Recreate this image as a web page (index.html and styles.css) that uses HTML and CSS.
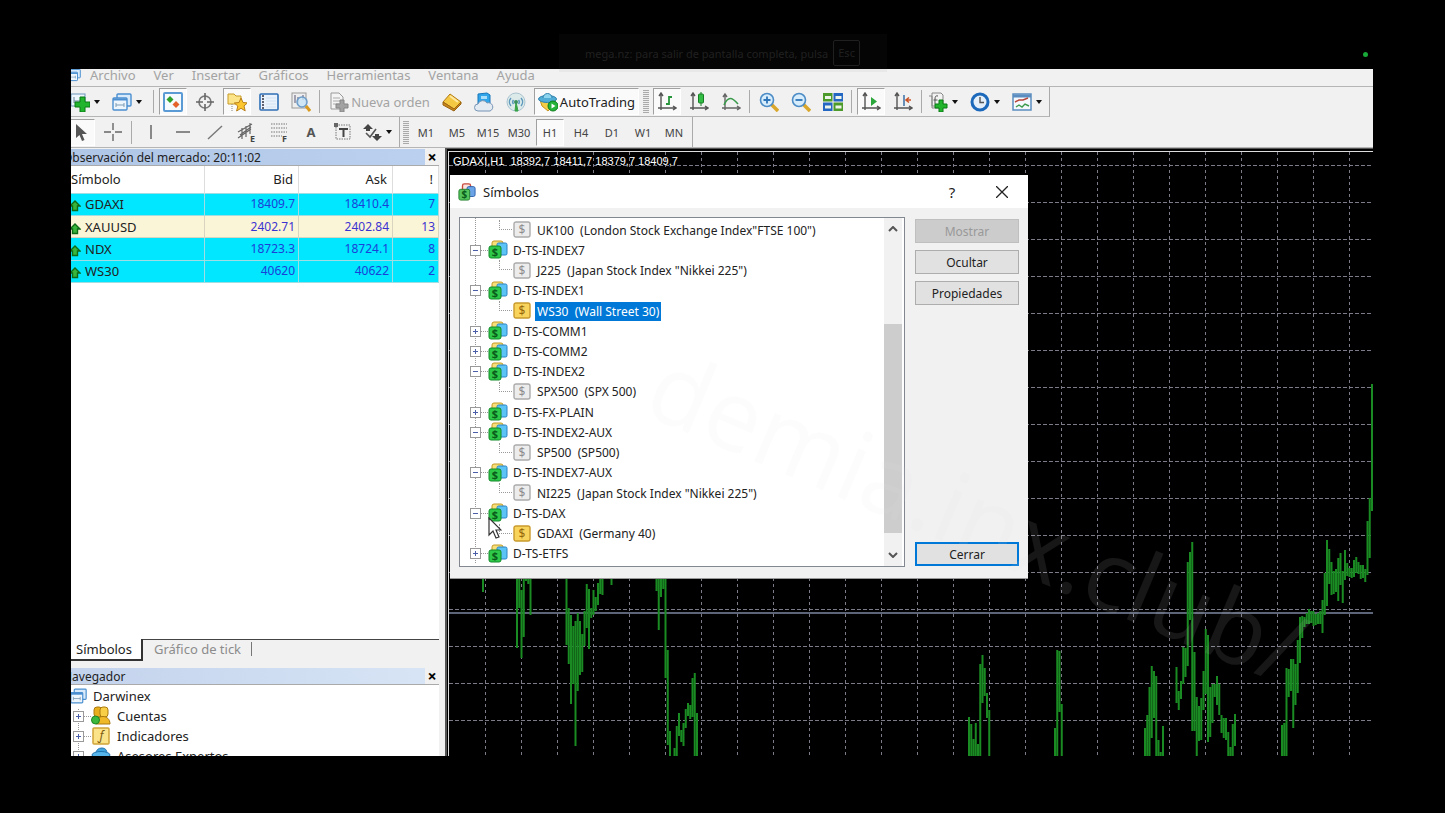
FILE: index.html
```html
<!DOCTYPE html>
<html lang="es">
<head>
  <meta charset="UTF-8">
  <meta name="viewport" content="width=device-width, initial-scale=1.0">
  <title>Darwinex MT4</title>
  <link rel="stylesheet" href="styles.css">
</head>
<body>
  <svg class="defs" aria-hidden="true">
    <symbol id="i-window" viewBox="0 0 20 20"><rect x="5" y="2" width="14" height="12" rx="1" fill="#d9ebfa" stroke="#4b8fd0" stroke-width="1.4"/><rect x="1" y="6" width="14" height="12" rx="1" fill="#eef6fd" stroke="#4b8fd0" stroke-width="1.4"/><path d="M1 7.5h14" stroke="#4b8fd0" stroke-width="2"/><path d="M4 15v-4M4 13h8M12 15v-4" stroke="#7d9bb5" fill="none"/></symbol>
    <symbol id="i-newchart" viewBox="0 0 20 20"><rect x="1" y="2" width="14" height="12" fill="#eef6fd" stroke="#6b93b8"/><path d="M4 11V5M4 9h7" stroke="#68849c"/><path d="M10 5h5v5h5v5h-5v5h-5v-5H5v-5h5z" fill="#22b42c" stroke="#087a14"/></symbol>
    <symbol id="i-market" viewBox="0 0 20 20"><rect x="1" y="1" width="18" height="18" rx="1" fill="#f5fafe" stroke="#5b9bd5" stroke-width="2"/><path d="M7 4l3.500 3.500L7 11 3.500 7.500z" fill="#2da02b"/><path d="M13 9l3.500 3.500L13 16l-3.500-3.500z" fill="#e4632c"/></symbol>
    <symbol id="i-target" viewBox="0 0 20 20"><circle cx="10" cy="10" r="6" fill="none" stroke="#777" stroke-width="1.6"/><path d="M10 1v7M10 12v7M1 10h7M12 10h7" stroke="#666" stroke-width="1.6"/></symbol>
    <symbol id="i-navstar" viewBox="0 0 20 20"><path d="M1 2h6l2 2h5v8H1z" fill="#fbe48a" stroke="#c79a28"/><path d="M5 12v7" stroke="#888" stroke-dasharray="1 1"/><path d="M14 6l2 4.500 4.500.4-3.500 3 1.200 5L14 16.300 9.600 19l1.200-5-3.500-3 4.700-.5z" fill="#fbc62f" stroke="#b9801a"/></symbol>
    <symbol id="i-terminal" viewBox="0 0 20 20"><rect x="1" y="2" width="18" height="16" rx="1" fill="#eaf2fb" stroke="#2f6fb5" stroke-width="1.600"/><path d="M4 3v14" stroke="#334" stroke-width="1.500" stroke-dasharray="2 1"/><path d="M7 6h10M7 9h10M7 12h10M7 15h10" stroke="#d3e2f3"/></symbol>
    <symbol id="i-tester" viewBox="0 0 20 20"><rect x="1" y="1" width="14" height="15" fill="#eee" stroke="#999"/><path d="M4 3v8M7 5v8M12 3v5" stroke="#557" /><circle cx="11" cy="10" r="5" fill="#c6e4f8" fill-opacity=".8" stroke="#6d9cc8" stroke-width="1.500"/><path d="M15 14l4 5" stroke="#d99a1e" stroke-width="3"/></symbol>
    <symbol id="i-order" viewBox="0 0 20 20"><path d="M2 1h8l4 4v12H2z" fill="#f4f4f4" stroke="#999"/><path d="M4 6h7M4 9h8M4 12h6" stroke="#aaa"/><path d="M11 8h4v4h4v4h-4v4h-4v-4H7v-4h4z" fill="#a2a2a2" stroke="#858585"/></symbol>
    <symbol id="i-book" viewBox="0 0 20 20"><path d="M8 2l11 8-7 7L1 10z" fill="#f5c843" stroke="#b27a16"/><path d="M1 10v3l11 6 7-7v-2l-7 7z" fill="#c9861a" stroke="#9a6410"/><path d="M8 4l8 6" stroke="#ffe9a0" stroke-width="2"/></symbol>
    <symbol id="i-cloud" viewBox="0 0 20 20"><path d="M4 2l9-1 3 2v9H4z" fill="#31a5ea" stroke="#1977b9"/><path d="M7 4h6v3H7z" fill="#a9defa"/><path d="M4 19a3.500 3.500 0 010-7 5 5 0 019-1 4 4 0 013 8z" fill="#e3eaf2" stroke="#7794b5"/></symbol>
    <symbol id="i-signal" viewBox="0 0 20 20"><circle cx="10" cy="10" r="9" fill="#dcebe9" stroke="#a9c2d0"/><path d="M5 14a6 6 0 010-8M15 14a6 6 0 000-8M7.500 12a3 3 0 010-4M12.500 12a3 3 0 000-4" fill="none" stroke="#5f99bd" stroke-width="1.500"/><path d="M9 19l1-9 2 9z" fill="#37a345" stroke="#37a345"/><circle cx="10" cy="10" r="2" fill="#3b8f60"/></symbol>
    <symbol id="i-auto" viewBox="0 0 20 20"><path d="M2 8l16-1-2 6-6 6-6-5z" fill="#f3cd45" stroke="#c6961f"/><ellipse cx="9.500" cy="7" rx="9" ry="3.500" fill="#4fadd6" stroke="#2e82ae"/><path d="M5 6a4.500 4.500 0 019 0" fill="#8dd4ee" stroke="#2e82ae"/><circle cx="15" cy="14" r="5" fill="#25b338" stroke="#0d7d1d"/><path d="M13.500 11.500v5l4-2.500z" fill="#fff"/></symbol>
    <symbol id="i-bars" viewBox="0 0 20 20"><path d="M4 2v16M1 16h18M2 4l2-3 2 3M16 14l3 2-3 2" fill="none" stroke="#555" stroke-width="1.400"/><path d="M12 4v9M12 5h3M9 12h3" stroke="#26953b" stroke-width="1.800"/></symbol>
    <symbol id="i-candle" viewBox="0 0 20 20"><path d="M4 2v16M1 16h18M2 4l2-3 2 3M16 14l3 2-3 2" fill="none" stroke="#555" stroke-width="1.400"/><path d="M12 0v14" stroke="#157f24"/><rect x="9.500" y="2" width="5" height="9" rx="1" fill="#33bd44" stroke="#157f24"/></symbol>
    <symbol id="i-line" viewBox="0 0 20 20"><path d="M4 3v15M1 16h18M2 5l2-3 2 3M16 14l3 2-3 2" fill="none" stroke="#666" stroke-width="1.400"/><path d="M3 13c4-9 8-8 14-1" fill="none" stroke="#3b9a4c" stroke-width="1.500"/></symbol>
    <symbol id="i-zoomin" viewBox="0 0 20 20"><path d="M12 12l7 7" stroke="#d9a72b" stroke-width="3.500"/><circle cx="8" cy="8" r="6.500" fill="#d7edfb" stroke="#4c8cc6" stroke-width="1.600"/><path d="M4.500 8h7M8 4.500v7" stroke="#2d74b8" stroke-width="1.800"/></symbol>
    <symbol id="i-zoomout" viewBox="0 0 20 20"><path d="M12 12l7 7" stroke="#d9a72b" stroke-width="3.500"/><circle cx="8" cy="8" r="6.500" fill="#d7edfb" stroke="#4c8cc6" stroke-width="1.600"/><path d="M4.500 8h7" stroke="#2d74b8" stroke-width="1.800"/></symbol>
    <symbol id="i-tile" viewBox="0 0 20 20"><path d="M0 1h9.500v8.500H0zM10.500 10.500H20V19h-9.500z" fill="#4c9a2a"/><path d="M10.500 1H20v8.500h-9.500zM0 10.500h9.500V19H0z" fill="#2467c2"/><path d="M2 4h6v3H2zM12.500 4h6v3h-6zM2 13.500h6v3H2zM12.500 13.500h6v3h-6z" fill="#edf5ea"/></symbol>
    <symbol id="i-scroll" viewBox="0 0 20 20"><path d="M4 2v16M1 16h18M2 4l2-3 2 3M16 14l3 2-3 2" fill="none" stroke="#555" stroke-width="1.400"/><path d="M10 5v9l6-4.500z" fill="#2aa63a"/></symbol>
    <symbol id="i-shift" viewBox="0 0 20 20"><path d="M4 2v16M1 16h18M2 4l2-3 2 3M16 14l3 2-3 2" fill="none" stroke="#555" stroke-width="1.400"/><path d="M11 3v11" stroke="#3a6ea5" stroke-width="1.500"/><path d="M18 8h-5M16 5.500L13 8l3 2.500" fill="none" stroke="#cb5227" stroke-width="1.600"/></symbol>
    <symbol id="i-indic" viewBox="0 0 20 20"><path d="M4 1h9l2 2v11H4z" fill="#f2f2f2" stroke="#888"/><path d="M1 4h3v12h9" fill="none" stroke="#888"/><path d="M10 4q-3-1-3 3v5M5.500 8h4" fill="none" stroke="#555"/><path d="M11 8h4v4h4v4h-4v4h-4v-4H7v-4h4z" fill="#22b42c" stroke="#087a14"/></symbol>
    <symbol id="i-clock" viewBox="0 0 20 20"><circle cx="10" cy="10" r="8" fill="#e4eff9" stroke="#1c69bb" stroke-width="3"/><path d="M10 5v5.500h4" fill="none" stroke="#555" stroke-width="1.400"/></symbol>
    <symbol id="i-templ" viewBox="0 0 20 20"><rect x="1" y="2" width="18" height="16" fill="#f5f9fd" stroke="#5b8dc0" stroke-width="1.500"/><path d="M1 4h18" stroke="#5b8dc0" stroke-width="3"/><path d="M3 10l4-2h4l5-2" fill="none" stroke="#b6453a" stroke-width="1.400"/><path d="M4 15l3-2 3 2 3-3 4 2" fill="none" stroke="#3b9a4c" stroke-width="1.400"/></symbol>
    <symbol id="i-pointer" viewBox="0 0 20 20"><path d="M5 2v14l3.500-3 2.500 6 2.500-1-2.500-6H16z" fill="#555"/></symbol>
    <symbol id="i-cross" viewBox="0 0 20 20"><path d="M10 1v7M10 12v7M1 10h7M12 10h7" stroke="#666" stroke-width="1.400"/></symbol>
    <symbol id="i-vline" viewBox="0 0 20 20"><path d="M10 3v14" stroke="#666" stroke-width="1.500"/></symbol>
    <symbol id="i-hline" viewBox="0 0 20 20"><path d="M3 10h14" stroke="#666" stroke-width="1.500"/></symbol>
    <symbol id="i-trend" viewBox="0 0 20 20"><path d="M3 17L17 4" stroke="#777" stroke-width="1.400"/></symbol>
    <symbol id="i-chan" viewBox="0 0 20 20"><path d="M1 10L15 2M1 16L14 7M5 17V6M9 15V4M13 12V1M3 13l11-8" stroke="#666" stroke-width="1.200"/><text x="13" y="20" font-size="9" font-weight="bold" fill="#444">E</text></symbol>
    <symbol id="i-fibo" viewBox="0 0 20 20"><path d="M2 2h16M2 6h16M2 10h16M2 14h11" stroke="#777" stroke-dasharray="1.500 1"/><text x="13" y="20" font-size="9" font-weight="bold" fill="#444">F</text></symbol>
    <symbol id="i-text" viewBox="0 0 20 20"><text x="10" y="15" font-size="13" font-weight="bold" text-anchor="middle" fill="#555">A</text></symbol>
    <symbol id="i-label" viewBox="0 0 20 20"><rect x="3" y="3" width="14" height="14" fill="none" stroke="#777" stroke-dasharray="1.500 1"/><path d="M1 1h4v4H1z" fill="#666"/><path d="M6 7h9M10.500 7v8" stroke="#444" stroke-width="2"/></symbol>
    <symbol id="i-arrows" viewBox="0 0 20 20"><path d="M6 2l5 5-3 0v2H4V7H1zM15 19l-5-5h3v-2h4v2h3z" fill="#444"/><path d="M4 11l4 4 6-8" stroke="#555" fill="none" stroke-width="1.600"/></symbol>
    <symbol id="i-up" viewBox="0 0 12 12"><path d="M6 1l5 5H8.500v4.500h-5V6H1z" fill="#38b53a" stroke="#0d6a16" stroke-width="1.400"/></symbol>
    <symbol id="i-group" viewBox="0 0 20 20"><rect x="4" y="1" width="11" height="11" rx="2" fill="#f8df7a" stroke="#c29a25"/><rect x="9" y="3" width="10" height="12" rx="1.500" fill="#5cc3f6" stroke="#2a83c4"/><rect x="1" y="6" width="12" height="12" rx="2" fill="#2fc94a" stroke="#128a28"/><text x="7" y="16" font-size="11" font-weight="bold" text-anchor="middle" fill="#0a5c1b">$</text></symbol>
    <symbol id="i-groupred" viewBox="0 0 20 20"><rect x="5" y="1" width="9" height="10" rx="2" fill="#fbe3df" stroke="#c8483a" stroke-width="1.500"/><rect x="10" y="4" width="9" height="11" rx="2" fill="#6ba4e6" stroke="#2b5ea8"/><rect x="1" y="7" width="12" height="12" rx="2" fill="#55c45c" stroke="#1e7c2a"/><text x="7" y="17" font-size="11" font-weight="bold" text-anchor="middle" fill="#0a5c1b">$</text></symbol>
    <symbol id="i-off" viewBox="0 0 18 18"><rect x="1" y="1" width="16" height="15" rx="2" fill="#ececec" stroke="#ababab" stroke-width="1.400"/><text x="9" y="13" font-size="12" text-anchor="middle" fill="#8e8e8e">$</text></symbol>
    <symbol id="i-on" viewBox="0 0 18 18"><rect x="1" y="1" width="16" height="15" rx="2" fill="#f9d45c" stroke="#c99a2c" stroke-width="1.400"/><text x="9" y="13" font-size="12" text-anchor="middle" fill="#96680a">$</text></symbol>
    <symbol id="i-users" viewBox="0 0 20 20"><rect x="3" y="1" width="8" height="10" rx="3" fill="#e8ae1c" stroke="#a97a0e"/><rect x="9" y="1" width="8" height="10" rx="3" fill="#f8cf46" stroke="#a97a0e"/><path d="M5 18c0-10 14-10 14 0z" fill="#f0b92a" stroke="#a97a0e"/><circle cx="4.500" cy="14" r="4" fill="#3cb93c" stroke="#1c8424"/></symbol>
    <symbol id="i-func" viewBox="0 0 20 20"><rect x="2" y="2" width="16" height="16" rx="1" fill="#fbe38a" stroke="#cfa438" stroke-width="1.500"/><text x="10" y="14" font-size="12" font-style="italic" text-anchor="middle" fill="#7c5b10">ƒ</text></symbol>
    <symbol id="i-hat" viewBox="0 0 20 20"><path d="M5 8q0-6 6-6 5 0 5 6z" fill="#3fa4dd" stroke="#1f72ad"/><ellipse cx="10" cy="9" rx="9" ry="3.500" fill="#56b5ea" stroke="#1f72ad"/><path d="M4 11l6 8 6-8z" fill="#f3cd45"/></symbol>
    <symbol id="i-caret" viewBox="0 0 6 4"><path d="M0 0h6L3 4z" fill="#111"/></symbol>
  </svg>

  <main class="screen">
    <nav class="menu">
      <svg class="menu-icon"><use href="#i-window"/></svg>
      <a href="#">Archivo</a>
      <a href="#">Ver</a>
      <a href="#">Insertar</a>
      <a href="#">Gráficos</a>
      <a href="#">Herramientas</a>
      <a href="#">Ventana</a>
      <a href="#">Ayuda</a>
    </nav>

    <div class="toolbar main-bar">
      <button class="drop" aria-label="Nuevo gráfico"><svg><use href="#i-newchart"/></svg><svg class="caret"><use href="#i-caret"/></svg></button>
      <button class="drop" aria-label="Perfiles"><svg><use href="#i-window"/></svg><svg class="caret"><use href="#i-caret"/></svg></button>
      <span class="sep"></span>
      <button class="on" aria-label="Observación del mercado"><svg><use href="#i-market"/></svg></button>
      <button aria-label="Ventana de datos"><svg><use href="#i-target"/></svg></button>
      <button class="on" aria-label="Navegador"><svg><use href="#i-navstar"/></svg></button>
      <button aria-label="Terminal"><svg><use href="#i-terminal"/></svg></button>
      <button aria-label="Probador"><svg><use href="#i-tester"/></svg></button>
      <span class="sep"></span>
      <button class="wide order" disabled><svg><use href="#i-order"/></svg>Nueva orden</button>
      <button aria-label="MetaEditor"><svg><use href="#i-book"/></svg></button>
      <button aria-label="Nube"><svg><use href="#i-cloud"/></svg></button>
      <button aria-label="Señales"><svg><use href="#i-signal"/></svg></button>
      <button class="wide on auto"><svg><use href="#i-auto"/></svg>AutoTrading</button>
      <span class="grip"></span>
      <button class="on" aria-label="Barras"><svg><use href="#i-bars"/></svg></button>
      <button aria-label="Velas"><svg><use href="#i-candle"/></svg></button>
      <button aria-label="Línea"><svg><use href="#i-line"/></svg></button>
      <span class="sep"></span>
      <button aria-label="Acercar"><svg><use href="#i-zoomin"/></svg></button>
      <button aria-label="Alejar"><svg><use href="#i-zoomout"/></svg></button>
      <button aria-label="Mosaico"><svg><use href="#i-tile"/></svg></button>
      <span class="sep"></span>
      <button class="on" aria-label="Desplazamiento automático"><svg><use href="#i-scroll"/></svg></button>
      <button aria-label="Desplazar gráfico"><svg><use href="#i-shift"/></svg></button>
      <span class="sep"></span>
      <button class="drop" aria-label="Indicadores"><svg><use href="#i-indic"/></svg><svg class="caret"><use href="#i-caret"/></svg></button>
      <button class="drop" aria-label="Períodos"><svg><use href="#i-clock"/></svg><svg class="caret"><use href="#i-caret"/></svg></button>
      <button class="drop" aria-label="Plantillas"><svg><use href="#i-templ"/></svg><svg class="caret"><use href="#i-caret"/></svg></button>
    </div>

    <div class="bar-row">
      <div class="toolbar draw-bar">
        <button class="on" aria-label="Cursor"><svg><use href="#i-pointer"/></svg></button>
        <button aria-label="Cruz"><svg><use href="#i-cross"/></svg></button>
        <span class="sep"></span>
        <button aria-label="Línea vertical"><svg><use href="#i-vline"/></svg></button>
        <button aria-label="Línea horizontal"><svg><use href="#i-hline"/></svg></button>
        <button aria-label="Línea de tendencia"><svg><use href="#i-trend"/></svg></button>
        <button aria-label="Canal"><svg><use href="#i-chan"/></svg></button>
        <button aria-label="Fibonacci"><svg><use href="#i-fibo"/></svg></button>
        <button aria-label="Texto"><svg><use href="#i-text"/></svg></button>
        <button aria-label="Etiqueta"><svg><use href="#i-label"/></svg></button>
        <button class="drop" aria-label="Flechas"><svg><use href="#i-arrows"/></svg><svg class="caret"><use href="#i-caret"/></svg></button>
      </div>
      <div class="toolbar time-bar">
        <span class="grip"></span>
        <button>M1</button>
        <button>M5</button>
        <button>M15</button>
        <button>M30</button>
        <button class="on">H1</button>
        <button>H4</button>
        <button>D1</button>
        <button>W1</button>
        <button>MN</button>
      </div>
    </div>

    <div class="work">
      <aside class="side">
        <header class="pane-title"><span>Observación del mercado: 20:11:02</span><button aria-label="Cerrar panel">×</button></header>
        <div class="market">
          <table>
            <thead>
              <tr><th class="sym">Símbolo</th><th>Bid</th><th>Ask</th><th class="num">!</th></tr>
            </thead>
            <tbody>
              <tr><td class="sym"><svg><use href="#i-up"/></svg>GDAXI</td><td>18409.7</td><td>18410.4</td><td>7</td></tr>
              <tr class="gold"><td class="sym"><svg><use href="#i-up"/></svg>XAUUSD</td><td>2402.71</td><td>2402.84</td><td>13</td></tr>
              <tr><td class="sym"><svg><use href="#i-up"/></svg>NDX</td><td>18723.3</td><td>18724.1</td><td>8</td></tr>
              <tr><td class="sym"><svg><use href="#i-up"/></svg>WS30</td><td>40620</td><td>40622</td><td>2</td></tr>
            </tbody>
          </table>
        </div>
        <div class="tabs">
          <button class="tab active">Símbolos</button>
          <button class="tab">Gráfico de tick</button>
        </div>
        <header class="pane-title nav-title"><span>Navegador</span><button aria-label="Cerrar panel">×</button></header>
        <ul class="nav-tree">
          <li class="root"><svg><use href="#i-window"/></svg>Darwinex</li>
          <li><i class="box plus"></i><i class="dots"></i><svg><use href="#i-users"/></svg>Cuentas</li>
          <li><i class="box plus"></i><i class="dots"></i><svg><use href="#i-func"/></svg>Indicadores</li>
          <li><i class="box plus"></i><i class="dots"></i><svg><use href="#i-hat"/></svg>Asesores Expertos</li>
        </ul>
      </aside>

      <section class="chart">
        <svg class="plot"><g id="plot" transform="translate(-449 -152)"></g></svg>
        <div class="quote">GDAXI,H1&nbsp; 18392,7 18411,7 18379,7 18409,7</div>

        <div class="dialog" role="dialog" aria-label="Símbolos">
          <header class="dialog-title">
            <svg class="logo"><use href="#i-groupred"/></svg>
            <span>Símbolos</span>
            <button aria-label="Ayuda">?</button>
            <button aria-label="Cerrar ventana"><svg viewBox="0 0 12 12"><path d="M0 0l12 12M12 0L0 12" stroke="#222" stroke-width="1.300"/></svg></button>
          </header>
          <div class="dialog-body">
            <div class="list">
              <ul class="tree" id="tree"></ul>
              <div class="scroll">
                <svg viewBox="0 0 10 6"><path d="M1 5l4-4 4 4" fill="none" stroke="#555" stroke-width="2"/></svg>
                <div class="thumb"></div>
                <svg viewBox="0 0 10 6"><path d="M1 1l4 4 4-4" fill="none" stroke="#555" stroke-width="2"/></svg>
              </div>
              <svg class="cursor" viewBox="0 0 14 22"><path d="M1 1v17l4-4 3 7 3-1-3-7h5z" fill="#fff" stroke="#333" stroke-width="1.200"/></svg>
            </div>
            <div class="actions">
              <button disabled>Mostrar</button>
              <button>Ocultar</button>
              <button>Propiedades</button>
              <button class="primary">Cerrar</button>
            </div>
          </div>
        </div>
      </section>
    </div>
    <svg class="watermark" aria-hidden="true"><text transform="translate(570 344) rotate(23)">demia.inx.club/</text></svg>
  </main>

  <div class="toast">mega.nz: para salir de pantalla completa, pulsa <kbd>Esc</kbd></div>
  <div class="rec"></div>

  <script>
    // [icon, label, expander]; children have no expander
    const rows = [
      ['off', 'UK100\u00a0 (London Stock Exchange Index"FTSE 100")'],
      ['group', 'D-TS-INDEX7', 'minus'],
      ['off', 'J225\u00a0 (Japan Stock Index "Nikkei 225")'],
      ['group', 'D-TS-INDEX1', 'minus'],
      ['on', 'WS30\u00a0 (Wall Street 30)', '', true],
      ['group', 'D-TS-COMM1', 'plus'],
      ['group', 'D-TS-COMM2', 'plus'],
      ['group', 'D-TS-INDEX2', 'minus'],
      ['off', 'SPX500\u00a0 (SPX 500)'],
      ['group', 'D-TS-FX-PLAIN', 'plus'],
      ['group', 'D-TS-INDEX2-AUX', 'minus'],
      ['off', 'SP500\u00a0 (SP500)'],
      ['group', 'D-TS-INDEX7-AUX', 'minus'],
      ['off', 'NI225\u00a0 (Japan Stock Index "Nikkei 225")'],
      ['group', 'D-TS-DAX', 'minus'],
      ['on', 'GDAXI\u00a0 (Germany 40)'],
      ['group', 'D-TS-ETFS', 'plus']
    ];
    document.getElementById('tree').innerHTML = rows.map(([icon, label, box, selected]) => {
      const lead = box ? `<i class="box ${box}"></i><i class="dots"></i>` : '<i class="elbow"></i>';
      return `<li class="${box ? 'parent' : 'child'}">${lead}<svg><use href="#i-${icon}"/></svg><span${selected ? ' class="selected"' : ''}>${label}</span></li>`;
    }).join('');

    // first x, then high/low pairs, one bar every 9/4 px
    const runs = [
      [448, 342,367],
      [483, 570,592],
      [517, 570,648, 570,608, 590,658, 570,637, 570,581, 570,584, 570,615, 570,579],
      [566.5, 570,645, 608,664, 615,704, 626,684, 621,746, 613,691, 621,675, 634,672, 611,646, 584,628, 589,649, 608,618, 590,615, 597,611, 583,605, 570,594, 570,595],
      [611.5, 570,585],
      [656.5, 570,591, 570,630, 570,597, 570,589, 570,678, 650,745, 731,760],
      [674.5, 748,760, 726,760, 713,736, 730,742, 723,746, 709,728, 703,716, 705,719, 678,717, 673,760, 713,760],
      [969, 717,760, 724,760, 739,760, 723,760, 744,760, 664,760, 655,703, 668,696, 693,718, 710,760],
      [1055, 728,760, 650,760, 651,712, 704,760],
      [1145, 728,760, 715,760, 687,760, 666,738, 671,718, 676,760, 740,760, 752,760, 726,760],
      [1176.5, 667,703, 691,710, 681,699, 647,684, 648,677, 562,666, 552,620, 542,731, 652,731, 697,760, 706,741, 698,740, 671,710, 629,694, 635,742, 687,737, 684,723, 684,697, 676,705, 684,715, 715,733, 718,738, 718,740, 732,760, 747,760, 724,760, 714,746],
      [1282, 725,760, 723,760, 668,760, 669,697, 659,691, 659,728, 664,705, 640,693, 617,663, 616,638, 617,627, 613,624, 609,624, 611,623, 611,626, 614,625, 613,624, 611,624, 600,633, 573,615, 540,606, 549,584, 562,595, 571,594, 569,592, 558,601, 553,585, 571,603, 550,580, 563,576, 568,577, 568,578, 560,577, 557,573, 562,574, 565,579, 565,578, 569,582, 521,575, 498,558, 384,511]
    ];
    let vertical = '', horizontal = '', bars = '';
    for (let x = 485; x < 2600; x += 36) vertical += `M${x + .5} 152V1600`;
    for (let y = 165; y < 1600; y += 37) horizontal += `M449 ${y + .5}H2600`;
    runs.forEach(([x, ...v]) => {
      for (let i = 0; i < v.length; i += 2) bars += `M${x + i * 1.125} ${v[i]}V${v[i + 1]}`;
    });
    document.getElementById('plot').innerHTML =
      `<path class="grid-v" d="${vertical}"/><path class="grid-h" d="${horizontal}"/>` +
      `<path class="price" d="M449 613H2600"/><path class="bars" d="${bars}"/>`;
  </script>
</body>
</html>
```
FILE: styles.css
```css
* {
  box-sizing: border-box;
}
body {
  margin: 0;
  padding: 69px 72px 57px 71px;
  height: 100vh;
  background: #000;
  color: #222;
  font-family: "Noto Sans", "Open Sans", sans-serif;
  font-size: 13px;
  display: flex;
  overflow: hidden;
}
button {
  font: inherit;
  color: inherit;
  background: none;
  border: 0;
  padding: 0;
}
ul {
  list-style: none;
  margin: 0;
  padding: 0;
}
svg {
  flex: none;
}
.defs {
  display: none;
}
.screen {
  flex: 1;
  min-width: 0;
  display: flex;
  flex-direction: column;
  background: #f1f1f1;
  overflow: hidden;
  position: relative;
}

/* menu and toolbars */
.menu {
  height: 18px;
  flex: none;
  display: flex;
  gap: 18px;
  line-height: 12px;
  border-bottom: 1px solid #b5b5b5;
}
.menu a {
  color: #a3a3a3;
  text-decoration: none;
}
.menu-icon {
  width: 14px;
  height: 14px;
  margin: -1px -9px 0 -4px;
}
.toolbar {
  display: flex;
  align-items: center;
  flex: none;
  gap: 4px;
  height: 30px;
  border-right: 1px solid #aaa;
  border-bottom: 1px solid #b5b5b5;
}
.main-bar {
  align-self: flex-start;
  margin-left: -2px;
}
.toolbar button {
  width: 28px;
  height: 27px;
  display: flex;
  align-items: center;
  justify-content: center;
  border: 1px solid transparent;
}
.toolbar svg {
  width: 20px;
  height: 20px;
}
.toolbar .on {
  background: #fafafa;
  border-color: #a0a0a0 #fff #fff #a0a0a0;
}
.toolbar .drop {
  width: 38px;
  justify-content: flex-start;
  gap: 4px;
}
.toolbar .caret {
  width: 6px;
  height: 4px;
}
.toolbar .wide {
  gap: 2px;
}
.toolbar .order {
  width: 109px;
  color: #a3a3a3;
}
.toolbar .auto {
  width: 105px;
}
.sep {
  width: 2px;
  height: 23px;
  border-left: 1px solid #aaa;
}
.grip {
  width: 6px;
  height: 23px;
  background: repeating-linear-gradient(#aaa 0 1px, #eee 1px 2px);
}
.bar-row {
  display: flex;
  flex: none;
  border-bottom: 1px solid #b5b5b5;
}
.bar-row .toolbar {
  border-bottom: 0;
}
.draw-bar {
  margin-left: -4px;
}
.time-bar {
  gap: 3px;
  padding: 0 4px 0 3px;
  color: #444;
  font-size: 11px;
}

/* left side */
.work {
  flex: 1;
  min-height: 0;
  display: flex;
}
.side {
  width: 374px;
  flex: none;
  padding: 1px 6px 0 0;
  display: flex;
  flex-direction: column;
}
.pane-title {
  height: 17px;
  flex: none;
  display: flex;
  align-items: center;
  justify-content: space-between;
  font-size: 12px;
  border-bottom: 1px solid #aaa;
  background: linear-gradient(90deg, #b0c6e6, #bcd1ef);
}
.pane-title span {
  margin-left: -8px;
}
.pane-title button {
  width: 14px;
  height: 16px;
  background: #f1f1f1;
  font-size: 16px;
  font-weight: bold;
  line-height: 14px;
  color: #000;
}
.nav-title {
  margin-top: 7px;
  background: linear-gradient(90deg, #c3d3ec, #d8e5f6);
}
.market {
  flex: 1;
  background: #fff;
}
table {
  width: 100%;
  height: 117px;
  table-layout: fixed;
  border-collapse: collapse;
}
th {
  height: 27px;
  font-weight: normal;
  text-align: right;
  padding: 0 5px;
  border-right: 1px solid #ddd;
}
td {
  padding: 0 3px;
  text-align: right;
  font-size: 12px;
  color: #1c3fd8;
  background: #00e7ff;
  border: 1px solid #9fdde2;
  border-left: 0;
  line-height: 18px;
}
th:nth-child(2), th:nth-child(3) {
  width: 94px;
}
th.num {
  width: 46px;
}
.gold td {
  background: #fbf5d8;
  border-color: #d8d4c0;
  color: #3b33d0;
}
tr .sym {
  text-align: left;
  padding-left: 0;
  font-size: 13px;
  color: #222;
}
td svg {
  width: 12px;
  height: 12px;
  margin: 0 4px 0 -2px;
  vertical-align: -3px;
}
.tabs {
  height: 22px;
  flex: none;
  display: flex;
  align-items: flex-start;
  border-top: 1px solid #444;
}
.tab {
  height: 14px;
  margin-top: 2px;
  padding: 0 10px 0 11px;
  line-height: 14px;
  color: #8c8c8c;
  border-right: 1px solid #777;
}
.tab.active {
  height: 22px;
  margin-top: -1px;
  padding: 0 9px 0 5px;
  color: #222;
  background: #fff;
  border-right: 2px solid #333;
  border-bottom: 2px solid #333;
}
.nav-tree {
  height: 71px;
  flex: none;
  padding-top: 1px;
  background: repeating-linear-gradient(#999 0 1px, #fff 1px 2px) 7px 24px / 1px 60px no-repeat #fff;
  overflow: hidden;
}
.nav-tree li {
  height: 20px;
  padding-left: 2px;
  display: flex;
  align-items: center;
}
.nav-tree svg {
  width: 20px;
  height: 20px;
  margin-right: 6px;
}
.nav-tree .root {
  padding-left: 0;
}
.nav-tree .root svg {
  width: 17px;
  margin-left: -1px;
}
.box {
  width: 11px;
  height: 11px;
  border: 1px solid #999;
  background: linear-gradient(#4a5fa8, #4a5fa8) center / 5px 1px no-repeat #fff;
}
.box.plus {
  background: linear-gradient(#4a5fa8, #4a5fa8) center / 5px 1px no-repeat, linear-gradient(#4a5fa8, #4a5fa8) center / 1px 5px no-repeat, #fff;
}
.dots {
  width: 7px;
  border-top: 1px dotted #999;
}

/* chart */
.chart {
  flex: 1;
  min-width: 0;
  position: relative;
  background: #000;
  border-left: 2px solid #555;
  border-top: 1px solid #555;
  padding: 2px 0 0 1px;
}
.plot {
  display: block;
  width: 100%;
  height: 100%;
  border-top: 1px solid #ddd;
  border-left: 1px solid #ddd;
}
.grid-v, .grid-h {
  fill: none;
  stroke: #7c7c88;
  stroke-dasharray: 3 3;
}
.grid-h {
  stroke-dasharray: 4 2;
}
.price {
  stroke: #5d6578;
  stroke-width: 2;
}
.bars {
  stroke: #1a8a22;
  stroke-width: 2;
}
.quote {
  position: absolute;
  left: 6px;
  top: 4px;
  color: #fff;
  font-family: "Liberation Sans", sans-serif;
  font-size: 11px;
  line-height: 16px;
}
.watermark {
  position: absolute;
  inset: 0;
  width: 100%;
  height: 100%;
  pointer-events: none;
  fill: #ddd;
  fill-opacity: .1;
  font-family: "Open Sans", sans-serif;
  font-size: 98px;
}

/* symbols dialog */
.dialog {
  position: absolute;
  left: 3px;
  top: 26px;
  width: 578px;
  background: #f1f1f1;
  border-bottom: 1px solid #999;
}
.dialog-title {
  height: 33px;
  padding: 0 10px 0 8px;
  display: flex;
  align-items: center;
  background: #fff;
}
.dialog-title .logo {
  width: 18px;
  height: 18px;
  margin-right: 7px;
}
.dialog-title span {
  flex: 1;
}
.dialog-title button {
  width: 32px;
  margin-left: 18px;
  font-size: 15px;
  line-height: 18px;
}
.dialog-title button svg {
  width: 12px;
  height: 12px;
}
.dialog-body {
  padding: 9px 9px 11px;
  display: flex;
  gap: 10px;
}
.list {
  flex: 1;
  height: 350px;
  display: flex;
  position: relative;
  background: #fff;
  border: 1px solid #828790;
  font-size: 12px;
}
.tree {
  flex: 1;
  height: 346px;
  padding-top: 2px;
  display: grid;
  grid-template-rows: repeat(17, 1fr);
  background: repeating-linear-gradient(#999 0 1px, #fff 1px 2px) 15px 0 / 1px 100% no-repeat;
}
.tree li {
  display: flex;
  align-items: center;
  white-space: nowrap;
  min-height: 0;
}
.tree .parent {
  padding-left: 10px;
}
.parent svg {
  width: 20px;
  height: 20px;
  margin-right: 3px;
}
.child svg {
  width: 18px;
  height: 18px;
  margin-right: 4px;
}
.tree span {
  padding: 0 2px;
  line-height: 19px;
}
.tree .selected {
  color: #fff;
  background: #0078d7;
}
.elbow {
  width: 13px;
  height: 10px;
  margin-left: 39px;
  margin-right: 1px;
  align-self: flex-start;
  border-left: 1px dotted #999;
  border-bottom: 1px dotted #999;
}
.scroll {
  width: 18px;
  margin-right: 2px;
  padding: 8px 0;
  display: flex;
  flex-direction: column;
  align-items: center;
  background: #f1f1f1;
}
.scroll svg {
  width: 10px;
  height: 6px;
}
.thumb {
  width: 100%;
  flex: 1;
  margin: 92px 0 19px;
  background: #cdcdcd;
}
.cursor {
  position: absolute;
  left: 28px;
  top: 299px;
  width: 14px;
  height: 22px;
}
.actions {
  width: 104px;
  display: flex;
  flex-direction: column;
  gap: 7px;
  padding: 2px 0 1px;
}
.actions button {
  height: 24px;
  font-size: 12px;
  background: #e1e1e1;
  border: 1px solid #adadad;
}
.actions button:disabled {
  color: #999;
  background: #ccc;
  border-color: #bfbfbf;
}
.actions .primary {
  margin-top: auto;
  border: 2px solid #0078d7;
}

/* fullscreen notice */
.toast {
  position: absolute;
  top: 34px;
  left: 50%;
  transform: translateX(-50%);
  width: 328px;
  height: 38px;
  display: flex;
  align-items: center;
  justify-content: center;
  gap: 5px;
  white-space: nowrap;
  font-size: 11px;
  color: #202020;
  background: linear-gradient(rgba(5, 5, 5, 1) 35px, rgba(5, 5, 5, .04) 35px);
}
.toast kbd {
  font: inherit;
  padding: 3px 4px;
  line-height: 18px;
  border: 1px solid #202020;
  border-radius: 2px;
}
.rec {
  position: absolute;
  top: 52px;
  right: 77px;
  width: 5px;
  height: 5px;
  border-radius: 50%;
  background: #18a838;
}
```
